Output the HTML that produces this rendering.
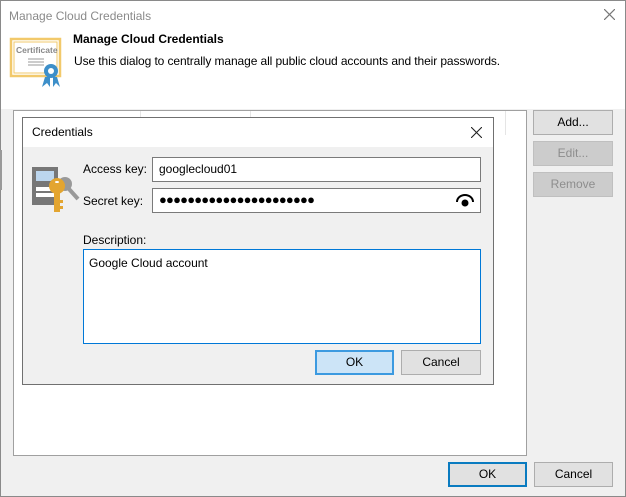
<!DOCTYPE html><html><head><style>
*{box-sizing:border-box;margin:0;padding:0}
body{width:626px;height:497px;background:#f0f0f0;font-family:"Liberation Sans",sans-serif;font-size:12px;color:#000;position:relative;overflow:hidden}
.a{position:absolute}
.btn{position:absolute;background:#e1e1e1;border:1px solid #adadad;text-align:center;line-height:22px;font-size:12px}
.in{position:absolute;background:#fff;border:1px solid #7a7a7a;padding-left:6px;line-height:22px;font-size:12px}
</style></head><body>
<div class="a" style="left:0;top:0;width:626px;height:497px;border:1px solid #8a8a8a"></div>
<div class="a" style="left:1px;top:1px;width:624px;height:108px;background:#fff"></div>
<div class="a" style="left:9px;top:9px;color:#8a8a8a;font-size:12px">Manage Cloud Credentials</div>
<svg class="a" style="left:604px;top:9px" width="11" height="11"><path d="M0 0L11 11M11 0L0 11" stroke="#777" stroke-width="1.2"/></svg>
<svg class="a" style="left:9px;top:37px" width="55" height="52">
<rect x="2" y="2" width="49" height="37" fill="#fff" stroke="#f2c96b" stroke-width="2.5"/>
<rect x="5" y="5" width="43" height="31" fill="none" stroke="#f2c96b" stroke-width="1"/>
<text x="7" y="16" font-size="8.5" font-weight="bold" fill="#888" font-family="Liberation Sans">Certificate</text>
<line x1="19" y1="22" x2="35" y2="22" stroke="#999"/><line x1="19" y1="25" x2="35" y2="25" stroke="#999"/><line x1="19" y1="28" x2="35" y2="28" stroke="#999"/>
<path d="M36 40 L33 50 L38 46 L41 50 L41 40Z M44 40 L44 50 L47 46 L51 50 L48 40Z" fill="#3d8fc9"/>
<circle cx="42" cy="34" r="7" fill="#3d8fc9"/><circle cx="42" cy="34" r="3" fill="#fff"/>
</svg>
<div class="a" style="left:73px;top:32px;font-weight:bold;font-size:12px">Manage Cloud Credentials</div>
<div class="a" style="left:74px;top:54px;font-size:12px;letter-spacing:-0.1px">Use this dialog to centrally manage all public cloud accounts and their passwords.</div>
<div class="a" style="left:0;top:150px;width:2px;height:40px;background:#999"></div>
<div class="a" style="left:13px;top:110px;width:514px;height:346px;background:#fff;border:1px solid #a0a0a0"></div>
<div class="a" style="left:140px;top:111px;width:1px;height:8px;background:#e5e5e5"></div>
<div class="a" style="left:250px;top:111px;width:1px;height:8px;background:#e5e5e5"></div>
<div class="a" style="left:505px;top:111px;width:1px;height:24px;background:#e5e5e5"></div>
<div class="btn" style="left:533px;top:110px;width:80px;height:25px">Add...</div>
<div class="btn" style="left:533px;top:141px;width:80px;height:25px;background:#cccccc;border-color:#bfbfbf;color:#8d8d8d">Edit...</div>
<div class="btn" style="left:533px;top:172px;width:80px;height:25px;background:#cccccc;border-color:#bfbfbf;color:#8d8d8d">Remove</div>
<div class="a" style="left:22px;top:117px;width:472px;height:268px;background:#f0f0f0;border:1px solid #707070"></div>
<div class="a" style="left:23px;top:118px;width:470px;height:29px;background:#fff"></div>
<div class="a" style="left:32px;top:125px;font-size:12px">Credentials</div>
<svg class="a" style="left:471px;top:127px" width="11" height="11"><path d="M0 0L11 11M11 0L0 11" stroke="#222" stroke-width="1.1"/></svg>
<svg class="a" style="left:30px;top:164px" width="52" height="54">
<rect x="2" y="3" width="26" height="38" fill="#777"/>
<rect x="6" y="7" width="18" height="10" fill="#bcd6ee"/>
<rect x="6" y="23" width="18" height="4" fill="#fff"/><rect x="6" y="29" width="18" height="4" fill="#fff"/>
<circle cx="35" cy="20" r="7" fill="#999"/><line x1="39" y1="25" x2="48" y2="35" stroke="#999" stroke-width="4"/>
<circle cx="27" cy="22" r="8" fill="#e3a530"/><ellipse cx="27" cy="18" rx="2" ry="1" fill="#fff"/>
<rect x="24" y="28" width="6" height="20" fill="#e3a530"/><rect x="30" y="36" width="3" height="3" fill="#e3a530"/><rect x="30" y="42" width="3" height="3" fill="#e3a530"/>
</svg>
<div class="a" style="left:83px;top:162px;font-size:12px">Access key:</div>
<div class="in" style="left:152px;top:157px;width:329px;height:25px">googlecloud01</div>
<div class="a" style="left:83px;top:194px;font-size:12px">Secret key:</div>
<div class="in" style="left:152px;top:188px;width:329px;height:25px;font-size:13px;letter-spacing:-0.8px">●●●●●●●●●●●●●●●●●●●●●●</div>
<svg class="a" style="left:456px;top:193px" width="18" height="14"><path d="M1 9 A8 7 0 0 1 17 9" fill="none" stroke="#000" stroke-width="2"/><circle cx="9" cy="10" r="3.5" fill="#000"/></svg>
<div class="a" style="left:83px;top:233px;font-size:12px">Description:</div>
<div class="a" style="left:83px;top:249px;width:398px;height:95px;background:#fff;border:1px solid #0078d7;padding:6px 5px;font-size:12px">Google Cloud account</div>
<div class="btn" style="left:315px;top:350px;width:79px;height:25px;background:#cce4f7;border:2px solid #3c9ae0;line-height:21px">OK</div>
<div class="btn" style="left:401px;top:350px;width:80px;height:25px">Cancel</div>
<div class="btn" style="left:448px;top:462px;width:79px;height:25px;border:2px solid #0a7bc0;line-height:21px">OK</div>
<div class="btn" style="left:534px;top:462px;width:79px;height:25px">Cancel</div>
</body></html>
